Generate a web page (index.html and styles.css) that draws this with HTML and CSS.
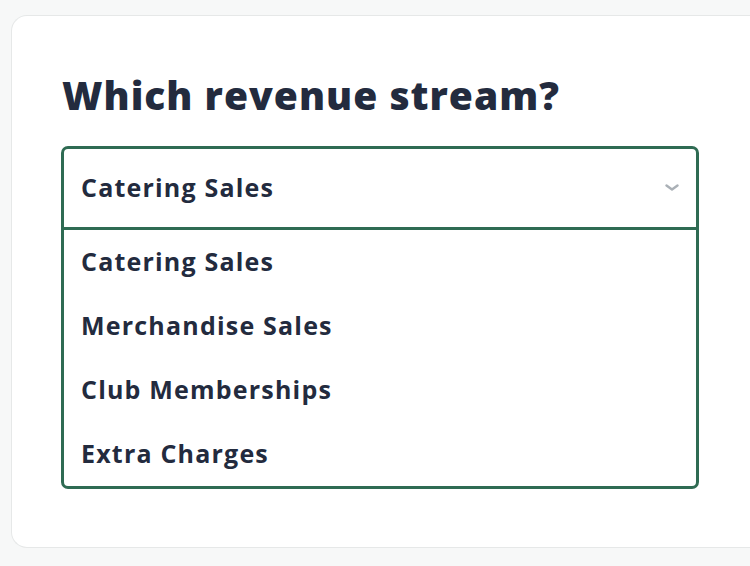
FILE: index.html
```html
<!DOCTYPE html>
<html lang="en">

<head>
    <meta charset="UTF-8">
    <meta name="viewport" content="width=device-width, initial-scale=1.0">
    <title>Revenue stream</title>
    <link rel="stylesheet" href="styles.css">
</head>

<body>
    <section class="card">
        <h1 class="title">Which revenue stream?</h1>
        <div class="select">
            <div class="select-head">
                <span>Catering Sales</span>
                <svg class="chevron" width="14" height="8" viewBox="0 0 14 8">
                    <path d="M1.5 1.5 L7 5.5 L12.5 1.5" fill="none" stroke="#aab0b6" stroke-width="2.4" stroke-linecap="round" stroke-linejoin="round"/>
                </svg>
            </div>
            <ul class="options">
                <li>Catering Sales</li>
                <li>Merchandise Sales</li>
                <li>Club Memberships</li>
                <li>Extra Charges</li>
            </ul>
        </div>
    </section>
</body>

</html>
```

FILE: styles.css
```css
html {
    box-sizing: border-box;
    font-family: "Open Sans", "Noto Sans", sans-serif;
    font-size: 16px;
}

*,
*:before,
*:after {
    box-sizing: inherit;
}

body {
    margin: 0;
    background-color: #f7f8f8;
    overflow: hidden;
    color: #232b3e;
}

.card {
    margin: 15px 0 0 11px;
    width: 739px;
    height: 533px;
    padding: 0 49px;
    background-color: #fff;
    border: 1px solid #e6e8e8;
    border-right: none;
    border-radius: 16px 0 0 16px;
}

.title {
    margin: 0;
    padding-top: 54px;
    padding-left: 1px;
    font-size: 39px;
    font-weight: 800;
    letter-spacing: 1px;
    line-height: 50px;
    height: 130px;
}

.select {
    width: 638px;
    border: 3px solid #2f6b53;
    border-radius: 7px;
}

.select-head {
    display: flex;
    justify-content: space-between;
    align-items: center;
    height: 81px;
    padding: 0 17px 3px 17px;
    border-bottom: 3px solid #2f6b53;
    font-size: 25px;
    font-weight: 700;
    letter-spacing: 1.2px;
}

.chevron {
    margin-top: 2px;
}

.options {
    list-style: none;
    margin: 0;
    padding: 0;
}

.options li {
    height: 64px;
    display: flex;
    align-items: center;
    padding: 0 0 3px 17px;
    font-size: 25px;
    font-weight: 700;
    letter-spacing: 1.2px;
}
```
